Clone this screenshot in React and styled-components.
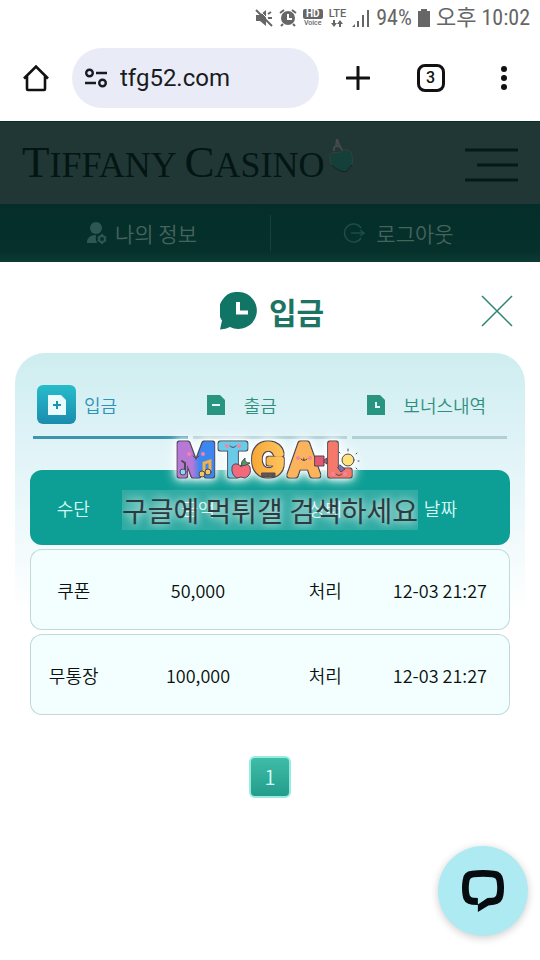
import styled, { createGlobalStyle } from 'styled-components';

const TABS = [
    { label: '입금', icon: 'plus', active: true },
    { label: '출금', icon: 'minus' },
    { label: '보너스내역', icon: 'clock' },
];

const COLUMNS = ['수단', '금액', '상태', '날짜'];

const ROWS = [
    ['쿠폰', '50,000', '처리', '12-03 21:27'],
    ['무통장', '100,000', '처리', '12-03 21:27'],
];

function StatusBar() {
    return (
        <StatusContainer>
            <svg width="18" height="18" viewBox="0 0 18 18" fill="#666">
                <path d="M1 6h4l6-5v16l-6-5H1z" />
                <path
                    d="M13 9h4M13 5l3-2"
                    stroke="#666"
                    strokeWidth="2"
                />
                <path d="M3 0l16 16" stroke="#fff" strokeWidth="1" />
                <path d="M1 1l16 16" stroke="#666" strokeWidth="2" />
            </svg>
            <svg width="18" height="18" viewBox="0 0 18 18">
                <circle cx="9" cy="9" r="7" fill="#666" />
                <path
                    d="M1 4l4-3M17 4l-4-3M4 15l-2 2M14 15l2 2"
                    stroke="#666"
                    strokeWidth="2"
                />
                <path d="M9 5v5h4" fill="none" stroke="#fff" strokeWidth="2" />
            </svg>
            <Stack>
                <HdBadge>HD</HdBadge>
                <Voice>Voice</Voice>
            </Stack>
            <Stack>
                <Lte>LTE</Lte>
                <svg width="12" height="7" viewBox="0 0 12 7" fill="#666">
                    <path d="M2 0h2v3h2L3 7 0 3h2zM8 7h2V4h2L9 0 6 4h2z" />
                </svg>
            </Stack>
            <svg width="18" height="18" viewBox="0 0 18 18" fill="#666">
                <path d="M0 18l3-3v3zM5 12h2v6H5zM10 6h2v12h-2zM15 1h2v17h-2z" />
            </svg>
            <StatusText>94%</StatusText>
            <svg width="12" height="18" viewBox="0 0 12 18" fill="#666">
                <path d="M3 0h6v2h3v16H0V2h3z" />
            </svg>
            <StatusText>오후 10:02</StatusText>
        </StatusContainer>
    );
}

function BrowserBar() {
    return (
        <BrowserContainer>
            <IconButton aria-label="home">
                <svg width="28" height="28" viewBox="0 0 28 28">
                    <path
                        d="M2 14.500L14 2.500l12 12M5 12v13q0 1 1 1h16q1 0 1-1V12"
                        fill="none"
                        stroke="#111"
                        strokeWidth="2.600"
                    />
                </svg>
            </IconButton>
            <AddressBar>
                <svg width="24" height="20" viewBox="0 0 24 20">
                    <g fill="none" stroke="#1a1b20" strokeWidth="2.400">
                        <circle cx="5.500" cy="5" r="3.300" />
                        <circle cx="18.500" cy="15" r="3.300" />
                        <path d="M12 5h11M1 15h11" />
                    </g>
                </svg>
                <Url aria-label="address" defaultValue="tfg52.com" />
            </AddressBar>
            <BrowserActions>
                <IconButton aria-label="new tab">
                    <svg width="24" height="24" viewBox="0 0 24 24">
                        <path
                            d="M12 1v22M1 12h22"
                            stroke="#111"
                            strokeWidth="3"
                            strokeLinecap="round"
                        />
                    </svg>
                </IconButton>
                <IconButton aria-label="tabs">
                    <TabCount>3</TabCount>
                </IconButton>
                <IconButton aria-label="more">
                    <svg width="8" height="26" viewBox="0 0 8 26" fill="#111">
                        <circle cx="4" cy="4" r="3" />
                        <circle cx="4" cy="13" r="3" />
                        <circle cx="4" cy="22" r="3" />
                    </svg>
                </IconButton>
            </BrowserActions>
        </BrowserContainer>
    );
}

function SiteHeader() {
    return (
        <>
            <HeaderContainer>
                <Logo href="#">
                    <LogoText>
                        <big>T</big>IFFANY <big>C</big>ASINO
                    </LogoText>
                    <svg width="26" height="38" viewBox="0 0 26 38">
                        <path
                            d="M5 13q-1-5 3-5t5 4M7 9l1-8 3 8"
                            fill="none"
                            stroke="#47494a"
                            strokeWidth="2"
                        />
                        <path
                            d="M1 17q3-4 9-2 6-6 12-1 3 6 1 13l-6 7q-9-1-14-7-3-5-2-10z"
                            fill="#153f39"
                            stroke="#35403e"
                        />
                        <path
                            d="M23 27l-6 7q-9-1-14-7"
                            fill="none"
                            stroke="#0f1f1d"
                        />
                    </svg>
                </Logo>
                <IconButton aria-label="menu">
                    <svg width="53" height="34" viewBox="0 0 53 34">
                        <path
                            d="M0 2h53M12 17h41M0 32h53"
                            stroke="#021b18"
                            strokeWidth="3"
                        />
                    </svg>
                </IconButton>
            </HeaderContainer>
            <UserNav>
                <UserLink href="#">
                    <svg width="20" height="22" viewBox="0 0 20 22" fill="#2c5852">
                        <circle cx="9" cy="6" r="6" />
                        <path d="M0 21q0-8 9-8-1 4 1 8z" />
                        <circle
                            cx="15"
                            cy="17"
                            r="3"
                            fill="none"
                            stroke="#2c5852"
                            strokeWidth="2"
                        />
                        <path
                            d="M15 12v2M15 20v2M11 15l1 1M18 18l1 1M19 15l-1 1M11 19l1-1"
                            stroke="#2c5852"
                            strokeWidth="2"
                        />
                    </svg>
                    나의 정보
                </UserLink>
                <UserLink href="#" $logout>
                    <svg width="22" height="20" viewBox="0 0 22 20">
                        <path
                            d="M18 5a9 9 0 1 0 0 10M8 10h12M17 7l4 3-4 3"
                            fill="none"
                            stroke="#1c4d48"
                            strokeWidth="1.500"
                        />
                    </svg>
                    로그아웃
                </UserLink>
            </UserNav>
        </>
    );
}

function TabIcon({ icon, active }) {
    const paper = active ? '#e9fbfd' : '#27957f';
    const mark = active ? '#1f93ad' : '#e3f6f6';
    const marks = {
        plus: 'M5 10h8M9 6v8',
        minus: 'M5 10h8',
        clock: 'M9 7v5h4',
    };

    return (
        <TabIconBox $active={active}>
            <svg width="18" height="20" viewBox="0 0 18 20">
                <path d="M0 0h13l5 5v15H0z" fill={paper} />
                <path d={marks[icon]} fill="none" stroke={mark} strokeWidth="2" />
            </svg>
        </TabIconBox>
    );
}

function Watermark() {
    return (
        <WatermarkContainer>
            <svg width="200" height="52" viewBox="0 0 200 52">
                <defs>
                    <linearGradient id="violet">
                        <stop offset="0.400" stopColor="#b878d6" />
                        <stop offset="0.600" stopColor="#3b86f0" />
                    </linearGradient>
                    <linearGradient id="amber">
                        <stop offset="0" stopColor="#f7a838" />
                        <stop offset="1" stopColor="#ffc45c" />
                    </linearGradient>
                    <filter id="outline" x="-10%" y="-20%" width="120%" height="140%">
                        <feMorphology
                            in="SourceAlpha"
                            operator="dilate"
                            radius="1"
                            result="edge"
                        />
                        <feFlood floodColor="#4b4a55" />
                        <feComposite in2="edge" operator="in" />
                        <feMerge>
                            <feMergeNode />
                            <feMergeNode in="SourceGraphic" />
                        </feMerge>
                    </filter>
                </defs>
                <g filter="url(#outline)">
                    <Letter x="26" y="40" fill="url(#violet)" stroke="url(#violet)">M</Letter>
                    <Letter x="63" y="40" fill="#6bcbe8" stroke="#6bcbe8">T</Letter>
                    <Letter x="98" y="40" fill="url(#amber)" stroke="url(#amber)">G</Letter>
                    <Letter x="134" y="40" fill="#fbb35c" stroke="#fbb35c">A</Letter>
                    <Letter x="169" y="40" fill="#f5796a" stroke="#f5796a">L</Letter>
                </g>
                <g stroke="#4b4a55" strokeLinecap="round">
                    <path d="M15 37v-9l-3-2" fill="none" strokeWidth="2" />
                    <ellipse cx="13" cy="37" rx="3" ry="3" fill="#8fd8f5" />
                    <path d="M34 38v-10l6-2v9" fill="none" stroke="#f1b24a" strokeWidth="3" />
                    <circle cx="32" cy="39" r="3" fill="#f6c566" />
                    <circle cx="38" cy="37" r="3" fill="#f6c566" />
                    <path
                        d="M71 31q-7-5-9 1-1 8 5 11l4-1 4 1q7-3 5-11-3-6-9-1z"
                        fill="#f2697b"
                    />
                    <path d="M71 31q0-5 4-8-1 5 5 5-4 3-9 3z" fill="#4d9a62" />
                    <path
                        d="M23 21q3 4 6 0M60 11q3 3 6 0M131 24q3 3 6 0M166 39q3 3 6 0"
                        fill="none"
                    />
                    <path d="M145 21h9v10h-9zM154 25l3-2v6l-3-2" fill="#e5566f" />
                    <path d="M92 38h13v4H92z" fill="#695545" />
                    <circle cx="96" cy="40" r="1" fill="#fbb35c" />
                    <circle cx="101" cy="40" r="1" fill="#fbb35c" />
                    <circle cx="178" cy="25" r="6" fill="#ffe27a" />
                    <path d="M170 30l5 4-4 3-3-4z" fill="#7472b8" />
                    <path d="M178 14v2M169 17l1 1M187 18l-1 1M188 26h1M186 33l1 1" />
                </g>
                <g fill="#f584a4">
                    <circle cx="19" cy="19" r="2" />
                    <circle cx="33" cy="19" r="2" />
                    <circle cx="57" cy="11" r="2" />
                    <circle cx="69" cy="11" r="2" />
                    <circle cx="128" cy="23" r="2" />
                    <circle cx="140" cy="23" r="2" />
                    <circle cx="163" cy="39" r="2" />
                    <circle cx="175" cy="39" r="2" />
                </g>
            </svg>
            <WatermarkText>구글에 먹튀갤 검색하세요</WatermarkText>
        </WatermarkContainer>
    );
}

function DepositModal() {
    return (
        <Modal>
            <ModalHeader>
                <Title>
                    <svg width="38" height="39" viewBox="0 0 38 39">
                        <path
                            d="M19 0a18.500 18.500 0 1 1-9 35q-4 2-10 2.500l2-9A18.500 18.500 0 0 1 19 0z"
                            fill="#107565"
                        />
                        <path
                            d="M18 10v10.500h10"
                            fill="none"
                            stroke="#fff"
                            strokeWidth="4"
                        />
                    </svg>
                    입금
                </Title>
                <CloseButton aria-label="close">
                    <svg width="32" height="32" viewBox="0 0 32 32">
                        <path
                            d="M1 1l30 30M31 1L1 31"
                            stroke="#2c8672"
                            strokeWidth="1.500"
                        />
                    </svg>
                </CloseButton>
            </ModalHeader>
            <Panel>
                <Tabs>
                    {TABS.map(({ label, icon, active }) => (
                        <Tab key={label} $active={active}>
                            <TabIcon icon={icon} active={active} />
                            {label}
                        </Tab>
                    ))}
                </Tabs>
                <Table>
                    <colgroup>
                        <Col $width="18%" />
                        <Col $width="34%" />
                        <Col $width="19%" />
                        <Col $width="29%" />
                    </colgroup>
                    <thead>
                        <tr>
                            {COLUMNS.map((column) => (
                                <Th key={column}>{column}</Th>
                            ))}
                        </tr>
                    </thead>
                    <tbody>
                        {ROWS.map((row) => (
                            <tr key={row[0]}>
                                {row.map((cell) => (
                                    <Td key={cell}>{cell}</Td>
                                ))}
                            </tr>
                        ))}
                    </tbody>
                </Table>
                <Watermark />
            </Panel>
            <Pagination>
                <PageButton>1</PageButton>
            </Pagination>
        </Modal>
    );
}

function App() {
    return (
        <>
            <GlobalStyle />
            <StatusBar />
            <BrowserBar />
            <SiteHeader />
            <DepositModal />
            <ChatButton aria-label="chat">
                <svg width="42" height="42" viewBox="0 0 127 127">
                    <path
                        fillRule="evenodd"
                        fill="#060c0f"
                        d="M30 2Q64-2 97 2q25 2 28 28 4 24 0 48-4 25-28 27l-17 2-32 20v-21l-18-1Q5 103 2 78-2 54 2 30 4 4 30 2zM36 22q-13 1-14 14-3 18 0 34 1 13 14 14l12 1v19l29-19 14-1q13-1 14-14 3-16 0-34-1-13-14-14-27-3-55 0z"
                    />
                </svg>
            </ChatButton>
        </>
    );
}

export default App;

const GlobalStyle = createGlobalStyle`
    * {
        box-sizing: border-box;
    }

    body {
        margin: 0;
        background: #fff;
        font-family: 'Noto Sans CJK KR', sans-serif;
        font-weight: 350;
    }

    button {
        font: inherit;
        cursor: pointer;
    }

    svg {
        display: block;
        flex: none;
    }
`;

const StatusContainer = styled.div`
    display: flex;
    align-items: center;
    justify-content: flex-end;
    gap: 6px;
    height: 35px;
    padding-right: 10px;
    color: #666;
`;

const StatusText = styled.span`
    font-family: 'Roboto Condensed', Roboto, 'Noto Sans CJK KR', sans-serif;
    font-size: 22px;
    font-weight: 400;
    line-height: 24px;
`;

const Stack = styled.div`
    display: flex;
    flex-direction: column;
    align-items: center;
    gap: 1px;
    font-family: Roboto, sans-serif;
    font-weight: 500;
`;

const HdBadge = styled.span`
    width: 20px;
    border-radius: 2px;
    background: #666;
    color: #fff;
    font-size: 10px;
    font-weight: 700;
    line-height: 10px;
    text-align: center;
`;

const Voice = styled.span`
    font-size: 7px;
    line-height: 7px;
`;

const Lte = styled.span`
    font-size: 11px;
    line-height: 10px;
`;

const BrowserContainer = styled.div`
    display: flex;
    align-items: center;
    height: 86px;
    padding-left: 22px;
`;

const IconButton = styled.button`
    display: flex;
    align-items: center;
    justify-content: center;
    padding: 0;
    border: 0;
    background: none;
`;

const AddressBar = styled.label`
    display: flex;
    flex: 1;
    align-items: center;
    gap: 12px;
    min-width: 0;
    height: 60px;
    margin-left: 22px;
    padding: 0 12px;
    border-radius: 30px;
    background: #e9ecf6;
`;

const Url = styled.input`
    flex: 1;
    min-width: 0;
    padding: 0;
    border: 0;
    outline: 0;
    background: none;
    color: #1a1b20;
    font-family: Roboto, sans-serif;
    font-size: 24px;
`;

const BrowserActions = styled.div`
    display: grid;
    grid-template-columns: repeat(3, 73px);
    margin-left: 2px;
`;

const TabCount = styled.span`
    width: 28px;
    height: 28px;
    border: 3px solid #111;
    border-radius: 8px;
    color: #111;
    font-family: Roboto, sans-serif;
    font-size: 16px;
    font-weight: 500;
    line-height: 22px;
`;

const HeaderContainer = styled.header`
    display: flex;
    align-items: center;
    justify-content: space-between;
    height: 83px;
    padding: 4px 22px 0;
    border-top: 1px solid #0c2c2a;
    background: #213735;
`;

const Logo = styled.a`
    display: flex;
    gap: 4px;
    align-items: flex-start;
    color: #041613;
    text-decoration: none;
`;

const LogoText = styled.span`
    font-family: 'Liberation Serif', serif;
    font-size: 36px;
    font-weight: 400;
    line-height: 54px;
    white-space: nowrap;

    big {
        font-size: 45px;
        line-height: 45px;
    }
`;

const UserNav = styled.nav`
    display: grid;
    grid-template-columns: 1fr 1fr;
    align-items: center;
    height: 58px;
    background: linear-gradient(#052e2b 0, #05302b 80%, #0b3b33 100%);
`;

const UserLink = styled.a`
    display: flex;
    align-items: center;
    justify-content: center;
    gap: ${(props) => (props.$logout ? '11px' : '8px')};
    height: 36px;
    padding: ${(props) => (props.$logout ? '0 14px 0 0' : '0 0 0 14px')};
    color: #47635e;
    font-size: 21px;
    line-height: 36px;
    text-decoration: none;

    & + & {
        border-left: 1px solid #14423b;
    }
`;

const Modal = styled.main`
    padding: 0 15px 120px;
    background: #fff;
`;

const ModalHeader = styled.div`
    display: grid;
    grid-template-columns: 1fr auto 1fr;
    align-items: center;
    height: 91px;
    padding: 7px 12px 0 16px;
`;

const Title = styled.h1`
    display: flex;
    grid-column: 2;
    align-items: center;
    gap: 11px;
    margin: 0;
    color: #1d7464;
    font-size: 30px;
    font-weight: 700;
    line-height: 40px;
`;

const CloseButton = styled(IconButton)`
    justify-self: end;
`;

const Panel = styled.section`
    position: relative;
    padding: 32px 15px 0;
    border-radius: 30px 30px 0 0;
    background: linear-gradient(#ceedef 0, #dff3f7 90px, #fff 260px);
`;

const Tabs = styled.div`
    display: grid;
    grid-template-columns: repeat(3, 1fr);
    gap: 5px;
    margin-bottom: 27px;
    padding: 0 3px;
`;

const Tab = styled.button`
    display: flex;
    align-items: center;
    gap: 8px;
    padding: 0 0 12px 4px;
    border: 0;
    border-bottom: 3px solid ${(props) => (props.$active ? '#3f95ac' : '#b1d0d5')};
    background: none;
    color: ${(props) => (props.$active ? '#2c93ba' : '#2f8f7f')};
    font-size: 18px;
    line-height: 26px;
    white-space: nowrap;
`;

const TabIconBox = styled.span`
    display: flex;
    align-items: center;
    justify-content: center;
    width: 39px;
    height: 39px;
    border-radius: 6px;
    background: ${(props) =>
        props.$active ? 'linear-gradient(#27bccb, #1b8cae)' : 'none'};
`;

const Table = styled.table`
    width: 100%;
    table-layout: fixed;
    border-collapse: separate;
    border-spacing: 0 4px;
    font-size: 18px;
    line-height: 26px;
    text-align: center;
`;

const Col = styled.col`
    width: ${(props) => props.$width};
`;

const Th = styled.th`
    height: 75px;
    padding: 0;
    background: #0d9e95;
    color: #d5fbf5;
    font-weight: 350;

    &:first-child {
        border-radius: 12px 0 0 12px;
    }

    &:last-child {
        border-radius: 0 12px 12px 0;
    }
`;

const Td = styled.td`
    height: 81px;
    padding: 0;
    border: solid #c0dad7;
    border-width: 1px 0;
    background: #f2fffe;
    color: #0c1010;

    &:first-child {
        border-left-width: 1px;
        border-radius: 12px 0 0 12px;
    }

    &:last-child {
        border-right-width: 1px;
        border-radius: 0 12px 12px 0;
    }
`;

const WatermarkContainer = styled.div`
    position: absolute;
    top: 82px;
    right: 0;
    left: 0;
    display: flex;
    flex-direction: column;
    align-items: center;
    gap: 3px;
    pointer-events: none;

    svg {
        filter: drop-shadow(0 0 3px #fff) drop-shadow(0 0 6px #fff);
    }
`;

const Letter = styled.text`
    font-family: Inter, sans-serif;
    font-size: 42px;
    font-weight: 500;
    stroke-width: 5px;
    stroke-linejoin: round;
    text-anchor: middle;
`;

const WatermarkText = styled.p`
    overflow: hidden;
    margin: 0;
    background: rgba(255, 255, 255, 0.15);
    color: #2d3b3f;
    font-size: 28px;
    font-weight: 400;
    line-height: 40px;
    text-shadow:
        0 0 8px rgba(255, 255, 255, 0.7),
        0 0 8px rgba(255, 255, 255, 0.5);
    white-space: nowrap;
`;

const Pagination = styled.div`
    display: flex;
    justify-content: center;
    margin-top: 37px;
`;

const PageButton = styled.button`
    width: 42px;
    height: 42px;
    padding: 0;
    border: 2px solid #98ebdf;
    border-radius: 6px;
    background: linear-gradient(#3fbda8, #239c8c);
    color: #d9fff8;
    font-size: 20px;
    line-height: 38px;
`;

const ChatButton = styled(IconButton)`
    position: fixed;
    right: 12px;
    bottom: 24px;
    width: 90px;
    height: 90px;
    border-radius: 50%;
    background: #aeeaf2;
    box-shadow: 0 2px 8px rgba(0, 0, 0, 0.2);
`;
